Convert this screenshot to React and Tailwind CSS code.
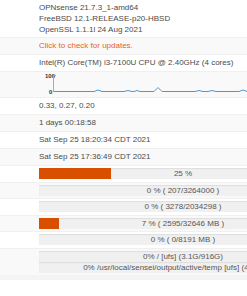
const rows = [
  { type: 'text', text: '0.33, 0.27, 0.20' },
  { type: 'text', text: '1 days 00:18:58' },
  { type: 'text', text: 'Sat Sep 25 18:20:34 CDT 2021' },
  { type: 'text', text: 'Sat Sep 25 17:36:49 CDT 2021' },
  { type: 'bar', pct: 25, label: '25 %' },
  { type: 'bar', pct: 0, label: '0 % ( 207/3264000 )' },
  { type: 'bar', pct: 0, label: '0 % ( 3278/2034298 )' },
  { type: 'bar', pct: 7, label: '7 % ( 2595/32646 MB )' },
  { type: 'bar', pct: 0, label: '0 % ( 0/8191 MB )' },
]

function Row({ striped, children, className = '' }) {
  return (
    <div className={`flex border-t border-[#f0f0f0] ${striped ? 'bg-[#f9f9f9]' : 'bg-white'} ${className}`}>
      <div className="w-[39px] shrink-0" />
      <div className="w-[288px] shrink-0">{children}</div>
    </div>
  )
}

function Bar({ pct, label }) {
  return (
    <div className="relative h-[11px] w-[288px] bg-[#f0f0f0] shadow-[inset_0_1px_1px_rgba(0,0,0,0.08)]">
      <div className="absolute left-0 top-0 h-full bg-[#d94f00]" style={{ width: `${pct}%` }} />
      <div className="relative whitespace-nowrap text-center text-[8px] leading-[11px] text-[#555]">{label}</div>
    </div>
  )
}

function CpuGraph() {
  const pts = [
    [0, 19], [40, 19], [44, 17.5], [48, 19], [70, 19], [74, 18], [78, 19], [80, 19], [83, 18], [86, 19],
    [100, 19], [104, 15], [108, 19], [141, 19], [145, 18], [149, 19], [154, 19], [158, 18], [162, 19],
    [185, 19], [189, 17.5], [193, 19], [260, 19],
  ]
  return (
    <div className="relative h-[25px]">
      <span className="absolute left-[6px] top-[1px] text-[6px] font-bold leading-[6px] text-[#333]">100</span>
      <span className="absolute left-[10px] top-[17px] text-[6px] font-bold leading-[6px] text-[#333]">0</span>
      <svg className="absolute left-[14px] top-0" width="275" height="22" viewBox="0 0 275 22">
        <line x1="0.5" y1="3" x2="0.5" y2="20" stroke="#aaa" strokeWidth="1" />
        <line x1="0" y1="3.5" x2="3" y2="3.5" stroke="#aaa" strokeWidth="1" />
        <polyline
          points={pts.map(([x, y]) => `${x + 1},${y + 0.5}`).join(' ')}
          fill="none"
          stroke="#4f97d4"
          strokeWidth="1"
        />
      </svg>
    </div>
  )
}

export default function App() {
  return (
    <div className="w-[247px] h-[296px] overflow-hidden bg-white text-[8px] text-[#4a4a4a] font-['Liberation_Sans_Narrow','Liberation_Sans',sans-serif]">
      <Row className="border-t-0">
        <div className="py-[2px] leading-[11px]">
          <div>OPNsense 21.7.3_1-amd64</div>
          <div>FreeBSD 12.1-RELEASE-p20-HBSD</div>
          <div>OpenSSL 1.1.1l 24 Aug 2021</div>
        </div>
      </Row>
      <Row striped>
        <div className="h-[16px] leading-[16px] text-[#e8621e]">Click to check for updates.</div>
      </Row>
      <Row>
        <div className="h-[16px] leading-[16px]">Intel(R) Core(TM) i3-7100U CPU @ 2.40GHz (4 cores)</div>
      </Row>
      <Row striped>
        <CpuGraph />
      </Row>
      {rows.map((r, i) => (
        <Row key={i} striped={i % 2 === 1}>
          {r.type === 'text' ? (
            <div className="h-[16px] leading-[16px]">{r.text}</div>
          ) : (
            <div className="h-[15.6px] pt-[2px]">
              <Bar pct={r.pct} label={r.label} />
            </div>
          )}
        </Row>
      ))}
      <Row striped>
        <div className="py-[2px]">
          <Bar pct={0} label="0% / [ufs] (3.1G/916G)" />
          <Bar pct={0} label="0% /usr/local/sensei/output/active/temp [ufs] (48K/916G)" />
        </div>
      </Row>
      <div className="h-[5px] bg-[#f4f4f4]" />
    </div>
  )
}
